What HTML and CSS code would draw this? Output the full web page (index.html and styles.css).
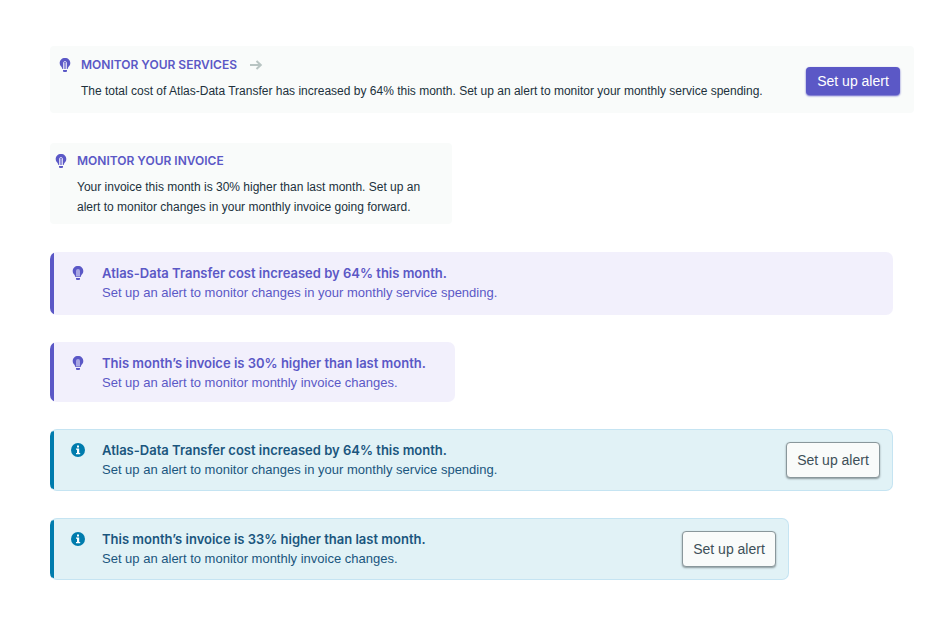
FILE: index.html
```html
<!DOCTYPE html>
<html lang="en">
<head>
<meta charset="utf-8">
<meta name="viewport" content="width=device-width, initial-scale=1">
<title>Cost alerts</title>
<link rel="stylesheet" href="styles.css">
</head>
<body>
<svg width="0" height="0" class="sprite" aria-hidden="true">
  <symbol id="bulb" viewBox="0 0 14 16">
    <path class="bulb-body" d="M7 1C3.900 1 1.700 3.100 1.700 6c0 1.800.8 2.900 1.700 3.800.5.500.5 1 .6 1.500.1.500.3.700.8.700h4.400c.5 0 .7-.2.800-.7.100-.5.100-1 .6-1.500.9-.9 1.700-2 1.700-3.800C12.300 3.100 10.100 1 7 1Z"/>
    <path class="bulb-coil" d="M5.500 12V6a1.500 1.500 0 0 1 3 0v6M7 6v6"/>
    <path class="bulb-body" d="M5 13h4v1a1 1 0 0 1-1 1H6a1 1 0 0 1-1-1Z"/>
  </symbol>
  <symbol id="bulb-solid" viewBox="0 0 14 16">
    <path class="bulb-body" d="M7 1C3.900 1 1.700 3.100 1.700 6c0 1.800.8 2.900 1.700 3.800.5.500.5 1 .6 1.500.1.500.3.700.8.700h4.400c.5 0 .7-.2.800-.7.100-.5.100-1 .6-1.500.9-.9 1.700-2 1.700-3.800C12.300 3.100 10.100 1 7 1Z"/>
    <path class="bulb-glow" d="M5 11.500V6a2 2 0 0 1 4 0v5.500Z"/>
    <path class="bulb-body" d="M5 13h4v1a1 1 0 0 1-1 1H6a1 1 0 0 1-1-1Z"/>
  </symbol>
  <symbol id="info" viewBox="0 0 14 14">
    <circle cx="7" cy="7" r="7" fill="#007cad"/>
    <path d="M6 2.500h2v2H6zM5 5.500h3.200v4.500h1v1.200H5V10h1V6.700H5z" fill="#fff"/>
  </symbol>
</svg>
<main class="page">
  <section class="card card-services">
    <svg class="bulb" aria-hidden="true"><use href="#bulb"/></svg>
    <div class="copy">
      <h2 class="card-title">MONITOR YOUR SERVICES
        <svg class="arrow" viewBox="0 0 14 12" aria-hidden="true"><path d="M1 6h11M7.500 2 11.800 6 7.500 10"/></svg>
      </h2>
      <p class="card-text">The total cost of Atlas-Data Transfer has increased by 64% this month. Set up an alert to monitor your monthly service spending.</p>
    </div>
    <button class="button primary" type="button">Set up alert</button>
  </section>

  <section class="card card-invoice">
    <svg class="bulb" aria-hidden="true"><use href="#bulb"/></svg>
    <div class="copy">
      <h2 class="card-title">MONITOR YOUR INVOICE</h2>
      <p class="card-text">Your invoice this month is 30% higher than last month. Set up an alert to monitor changes in your monthly invoice going forward.</p>
    </div>
  </section>

  <div class="banners">
    <section class="banner tip wide">
      <svg class="bulb" aria-hidden="true"><use href="#bulb-solid"/></svg>
      <div class="copy">
        <h2 class="banner-title">Atlas-Data Transfer cost increased by 64% this month.</h2>
        <p class="banner-text">Set up an alert to monitor changes in your monthly service spending.</p>
      </div>
    </section>

    <section class="banner tip narrow">
      <svg class="bulb" aria-hidden="true"><use href="#bulb-solid"/></svg>
      <div class="copy">
        <h2 class="banner-title">This month’s invoice is 30% higher than last month.</h2>
        <p class="banner-text">Set up an alert to monitor monthly invoice changes.</p>
      </div>
    </section>

    <section class="banner info wide">
      <svg class="info-icon" aria-hidden="true"><use href="#info"/></svg>
      <div class="copy">
        <h2 class="banner-title">Atlas-Data Transfer cost increased by 64% this month.</h2>
        <p class="banner-text">Set up an alert to monitor changes in your monthly service spending.</p>
      </div>
      <button class="button secondary" type="button">Set up alert</button>
    </section>

    <section class="banner info medium">
      <svg class="info-icon" aria-hidden="true"><use href="#info"/></svg>
      <div class="copy">
        <h2 class="banner-title">This month’s invoice is 33% higher than last month.</h2>
        <p class="banner-text">Set up an alert to monitor monthly invoice changes.</p>
      </div>
      <button class="button secondary" type="button">Set up alert</button>
    </section>
  </div>
</main>
</body>
</html>
```
FILE: styles.css
```css
* { box-sizing: border-box; }
body {
  margin: 0;
  background: #fff;
  font-family: "Liberation Sans", Arial, sans-serif;
}
h2, p { margin: 0; }
.sprite { display: block; height: 0; }
.page {
  display: flex;
  flex-direction: column;
  gap: 28px;
  padding: 46px 35px 40px 50px;
}
.copy { flex: 1; min-width: 0; }

.card {
  display: flex;
  align-items: flex-start;
  gap: 9px;
  border-radius: 4px;
  background: #f9fbfa;
  color: #21313c;
}
.card-services { padding: 9px 14px 12px 8px; }
.card-invoice { max-width: 402px; padding: 8px 24px 7px 4px; margin-top: 2px; }
.card-title {
  display: flex;
  align-items: center;
  gap: 12px;
  margin-bottom: 6px;
  color: #5b58c6;
  font-family: Inter, "Liberation Sans", sans-serif;
  font-size: 12px;
  font-weight: 600;
  line-height: 20px;
}
.card-text { font-size: 12px; line-height: 20px; }
.card .bulb { margin-top: 2px; }
.card .button { align-self: center; margin-top: 5px; }

.bulb, .info-icon, .arrow { flex: none; display: block; }
.bulb { width: 14px; height: 16px; }
.bulb-body { fill: #5b58c6; }
.bulb-coil { fill: none; stroke: #d5d4f2; stroke-width: 1; }
.bulb-glow { fill: #a9a7e3; }
.info-icon { width: 14px; height: 14px; }
.arrow {
  width: 14px;
  height: 12px;
  fill: none;
  stroke: #b8c4c2;
  stroke-width: 2;
}

.banners {
  display: flex;
  flex-direction: column;
  gap: 27px;
}
.banner {
  --bar: #5b58c6;
  --fill: #f2f0fc;
  display: flex;
  align-items: flex-start;
  gap: 17px;
  padding: 10px 12px 10px 20px;
  border: 1px solid transparent;
  border-radius: 7px;
  background: linear-gradient(to right, var(--bar) 4px, var(--fill) 4px) border-box;
  color: #5b58c6;
}
.wide { max-width: 843px; }
.medium { max-width: 739px; }
.narrow { max-width: 405px; }
.tip.wide { padding-bottom: 11px; }
.tip.narrow { padding-bottom: 8px; }
.banner-title, .banner-text {
  font-size: 13px;
  line-height: 20px;
}
.banner-title {
  font-family: Inter, "Liberation Sans", sans-serif;
  font-weight: 600;
}
.banner .bulb { margin-top: 2px; }
.info {
  --bar: #007cad;
  --fill: #e1f2f6;
  border-color: #c5e4f2;
  border-left-color: transparent;
  color: #1a567e;
}
.info .info-icon { margin-top: 3px; }
.info .button { align-self: center; }

.button {
  flex: none;
  width: 94px;
  padding: 0;
  border-radius: 4px;
  font-family: inherit;
  font-size: 14px;
  text-align: center;
}
.primary {
  height: 28px;
  border: 0;
  background: #5b58c6;
  color: #fff;
  box-shadow: 0 1px 2px #5b58c6;
}
.secondary {
  height: 36px;
  border: 1px solid #89979b;
  background: #f9fbfa;
  color: #3d4f58;
  box-shadow: 0 1px 2px #89979b;
}
```
